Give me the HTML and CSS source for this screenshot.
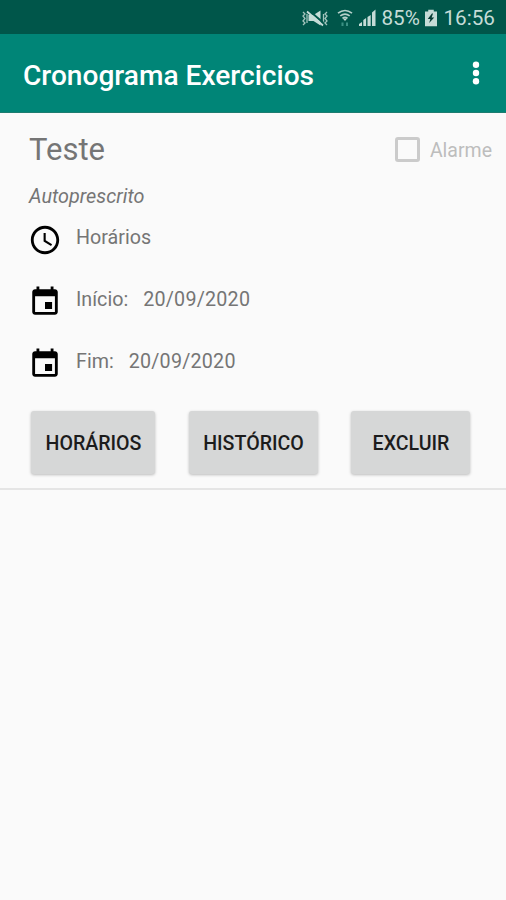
FILE: index.html
```
<!DOCTYPE html>
<html lang="pt-BR">
<head>
  <meta charset="UTF-8"/>
  <meta name="viewport" content="width=device-width,initial-scale=1.0"/>
  <title>Cronograma Exercicios</title>
  <link rel="stylesheet" href="styles.css">
</head>
<body>
  <div class="status-bar">
    <svg class="icon-mute" width="28" height="18" viewBox="0 0 28 18">
      <path class="wave" d="M2 3l2 2-2 2 2 2.500-2 2.500 2 2-2 2M6 5v9M26 3l-2 2 2 2-2 2.500 2 2.500-2 2 2 2M22.500 5v9"/>
      <path class="solid" d="M7.500 6h5l7-4.500v15l-7-4.500h-5z"/>
      <path class="slash" d="M7.500 1l15 13"/>
      <path class="strike" d="M6 2.500l16 14"/>
    </svg>
    <svg class="icon-wifi" width="16" height="18" viewBox="0 0 16 18">
      <path class="arc" d="M1 4.200Q8-1.200 15 4.200M3.300 6.900Q8 3.200 12.700 6.900M5.500 9.300Q8 7.300 10.500 9.300"/>
      <path class="solid" d="M5.800 9.500h4.400L8 12z"/>
      <path class="data" d="M5.500 13.500v3.500M10 13.500v3.500"/>
    </svg>
    <svg class="icon-signal" width="18" height="18" viewBox="0 0 18 18">
      <path class="solid" d="M0 17v-2l3-2v4zM4.300 17v-6l2.800-2v8zM8.500 17V8l3.200-2v11z"/>
      <path class="solid" d="M13 17V3.500l3.500-3V17z"/>
    </svg>
    <span class="percent">85%</span>
    <svg class="icon-battery" width="12" height="18" viewBox="0 0 13 18">
      <path class="solid" d="M3.500 0h6v2H13v16H0V2h3.500z"/>
      <path class="bolt" d="M7.500 4L3 10h2.800L4.500 14.500 10 8.500H7.200L8.700 4z"/>
    </svg>
    <span class="time">16:56</span>
  </div>

  <header class="app-bar">
    <h1>Cronograma Exercicios</h1>
    <button class="btn-menu" aria-label="Menu">
      <svg width="8" height="24" viewBox="0 0 8 24">
        <circle cx="4" cy="3.800" r="3.200"/>
        <circle cx="4" cy="12" r="3.200"/>
        <circle cx="4" cy="20.200" r="3.200"/>
      </svg>
    </button>
  </header>

  <main class="card">
    <div class="card-header">
      <h2>Teste</h2>
      <div class="alarm">
        <span class="checkbox"></span>
        <span class="alarm-label">Alarme</span>
      </div>
    </div>
    <p class="subtitle">Autoprescrito</p>

    <div class="row">
      <svg class="row-icon" viewBox="0 0 24 24"><path d="M11.990 2C6.470 2 2 6.480 2 12s4.470 10 9.990 10C17.520 22 22 17.520 22 12S17.520 2 11.990 2zM12 20c-4.420 0-8-3.580-8-8s3.580-8 8-8 8 3.580 8 8-3.580 8-8 8zm.5-13H11v6l5.250 3.150.75-1.230-4.500-2.670z"/></svg>
      <span class="label">Horários</span>
    </div>
    <div class="row">
      <svg class="row-icon" viewBox="0 0 24 24"><path d="M17 12h-5v5h5v-5zM16 1v2H8V1H6v2H5c-1.110 0-1.990.9-1.990 2L3 19c0 1.100.89 2 2 2h14c1.100 0 2-.9 2-2V5c0-1.100-.9-2-2-2h-1V1h-2zm3 18H5V8h14v11z"/></svg>
      <span class="label">Início:</span>
      <span class="date">20/09/2020</span>
    </div>
    <div class="row">
      <svg class="row-icon" viewBox="0 0 24 24"><path d="M17 12h-5v5h5v-5zM16 1v2H8V1H6v2H5c-1.110 0-1.990.9-1.990 2L3 19c0 1.100.89 2 2 2h14c1.100 0 2-.9 2-2V5c0-1.100-.9-2-2-2h-1V1h-2zm3 18H5V8h14v11z"/></svg>
      <span class="label">Fim:</span>
      <span class="date">20/09/2020</span>
    </div>

    <div class="actions">
      <button class="btn">HORÁRIOS</button>
      <button class="btn">HISTÓRICO</button>
      <button class="btn">EXCLUIR</button>
    </div>
  </main>
</body>
</html>
```
FILE: styles.css
```
/* ===== Global & Body ===== */
* { margin: 0; padding: 0; box-sizing: border-box; }
body {
  font-family: Roboto, sans-serif;
  min-height: 100vh;
  background: #fafafa;
  color: #757575;
  overflow: hidden;
}
svg { display: block; flex: none; }

/* ===== Status bar ===== */
.status-bar {
  height: 34px;
  display: flex;
  align-items: center;
  justify-content: flex-end;
  padding: 1px 11px 0 0;
  background: #00564a;
  color: #c5dcd7;
  font-size: 20.7px;
  line-height: 34px;
}
.status-bar .solid { fill: #c5dcd7; }
.status-bar .wave { fill: none; stroke: #a3c4bd; stroke-width: 1.3; }
.status-bar .slash { stroke: #00564a; stroke-width: 2; }
.status-bar .strike { stroke: #c5dcd7; stroke-width: 1.8; }
.status-bar .arc { fill: none; stroke: #b5d0ca; stroke-width: 1.7; }
.status-bar .data { stroke: #3c9184; stroke-width: 2; }
.status-bar .bolt { fill: #063c34; }
.icon-wifi { margin-left: 8px; }
.icon-signal { margin-left: 6px; }
.percent { width: 40px; margin-left: 4px; white-space: nowrap; }
.icon-battery { margin-left: 4px; }
.time { margin-left: 6px; }

/* ===== App bar ===== */
.app-bar {
  height: 79px;
  display: flex;
  align-items: center;
  justify-content: space-between;
  padding: 4px 26px 0 23px;
  background: #008577;
  border-bottom: 1px solid #1d7c70;
  color: #fff;
}
.app-bar h1 { font-size: 28.1px; font-weight: 500; padding-top: 1px; }
.btn-menu { background: none; border: none; fill: #fff; margin-top: -4px; }

/* ===== Card ===== */
.card {
  height: 377px;
  padding: 16px 14px 0 29px;
  border-bottom: 2px solid #e5e5e5;
}
.card-header {
  display: flex;
  justify-content: space-between;
  align-items: center;
  height: 40px;
}
.card-header h2 { font-size: 31px; font-weight: 400; }
.alarm { display: flex; align-items: center; gap: 10px; color: #bdbdbd; }
.alarm-label { font-size: 19.5px; padding-top: 2px; }
.checkbox {
  width: 25px;
  height: 25px;
  border: 3px solid #cbcbcb;
  border-radius: 3px;
}
.subtitle {
  margin-top: 16px;
  font-size: 19.8px;
  line-height: 24px;
  font-style: italic;
}
.row {
  display: flex;
  align-items: center;
  height: 34px;
  margin-bottom: 28px;
  font-size: 19.7px;
}
.subtitle + .row { margin-top: 14px; }
.row-icon { width: 34px; height: 34px; margin-left: -1px; fill: #000; }
.label { margin: -5px 14px 0 14px; }
.date { margin-top: -5px; padding-left: 1px; letter-spacing: 0.22px; }

/* ===== Buttons ===== */
.actions {
  display: grid;
  grid-template-columns: 124px 129px 119px;
  gap: 33.5px;
  margin: 30px 0 0 2px;
}
.btn {
  height: 63px;
  background: #d6d7d7;
  border: none;
  border-radius: 3px;
  box-shadow: 0 1px 3px rgba(0,0,0,0.25);
  color: #1c1c1c;
  font-family: inherit;
  font-size: 19.6px;
  font-weight: 500;
  padding: 1px 0 0 1px;
}
```
